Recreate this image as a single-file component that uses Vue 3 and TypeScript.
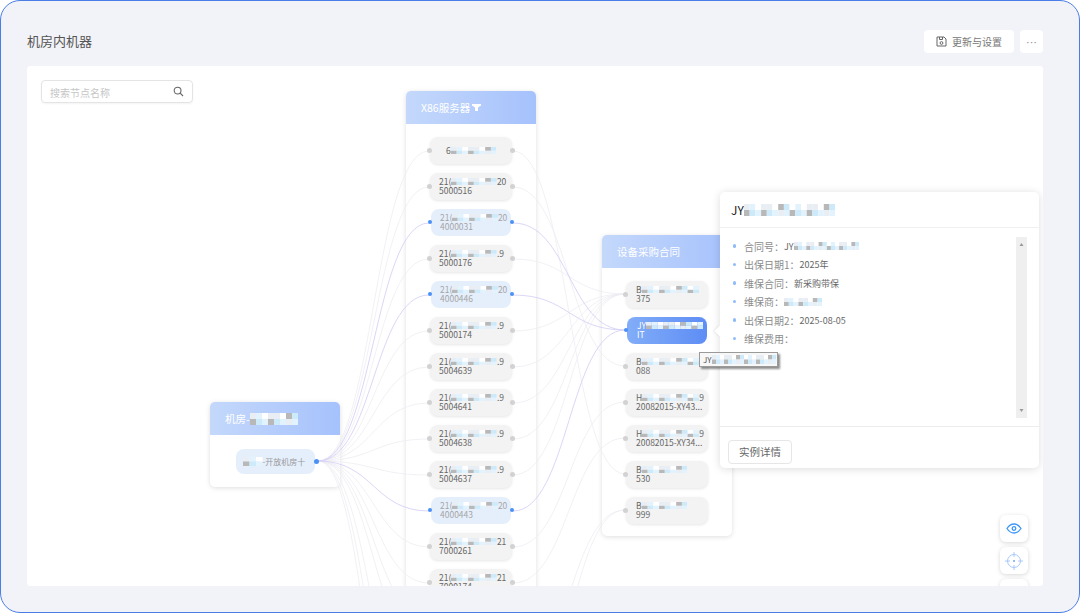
<script setup lang="ts">
import { h } from 'vue'

type NodeItem = { pre: string; suf?: string; line2?: string; kind?: string; n?: number }

const palette: Record<string, string> = {
  w: '#ffffff', l: '#e8eef4', b: '#cdeafb', c: '#e3f3fd', g: '#b8b8b8', h: '#d8d8d8'
}
const rowA = 'lcwllwgbwcwllwgb'
const rowB = 'gbcgbclcgbcgbclc'

const Mosaic = (props: { n?: number; cw?: number; ch?: number }) => {
  const n = Number(props.n ?? 8)
  const cw = Number(props.cw ?? 5.7)
  const ch = Number(props.ch ?? 3.8)
  const rects: ReturnType<typeof h>[] = []
  for (let i = 0; i < n; i++) {
    rects.push(h('rect', { x: i * cw, y: 0, width: cw, height: ch, fill: palette[rowA[i % rowA.length]] }))
    rects.push(h('rect', { x: i * cw, y: ch, width: cw, height: ch, fill: palette[rowB[i % rowB.length]] }))
  }
  return h('svg', { class: 'mosaic', width: n * cw, height: ch * 2, style: { verticalAlign: 'middle', flex: 'none' } }, rects)
}

const bNodes: NodeItem[] = [
  { pre: '6' },
  { pre: '21(', suf: '20', line2: '5000516' },
  { pre: '21(', suf: '20', line2: '4000031', kind: 'light' },
  { pre: '21(', suf: '.9', line2: '5000176' },
  { pre: '21(', suf: '20', line2: '4000446', kind: 'light' },
  { pre: '21(', suf: '.9', line2: '5000174' },
  { pre: '21(', suf: '.9', line2: '5004639' },
  { pre: '21(', suf: '.9', line2: '5004641' },
  { pre: '21(', suf: '.9', line2: '5004638' },
  { pre: '21(', suf: '.9', line2: '5004637' },
  { pre: '21(', suf: '20', line2: '4000443', kind: 'light' },
  { pre: '21(', suf: '21', line2: '7000261' },
  { pre: '21(', suf: '21', line2: '7000174' }
]
const cNodes: NodeItem[] = [
  { pre: 'B', line2: '375' },
  { pre: 'JY', line2: 'IT', kind: 'active' },
  { pre: 'B', line2: '088' },
  { pre: 'H', suf: '9', line2: '20082015-XY43...' },
  { pre: 'H', suf: '9', line2: '20082015-XY34...' },
  { pre: 'B', line2: '530', n: 8 },
  { pre: 'B', line2: '999', n: 8 }
]

const by = (i: number) => 151 + i * 36
const cy = (i: number) => 294 + i * 36
const curve = (x1: number, y1: number, x2: number, y2: number) => {
  const m = (x1 + x2) / 2
  return `M${x1} ${y1}C${m} ${y1} ${m} ${y2} ${x2} ${y2}`
}

const grayLinks: string[] = []
const purpleLinks: string[] = []
for (let i = 0; i < 15; i++) {
  const d = curve(318, 461, 429, by(i))
  if (i === 2 || i === 4 || i === 10) purpleLinks.push(d)
  else grayLinks.push(d)
}
for (const y of [760, 850, 930]) grayLinks.push(curve(318, 461, 429, y))
const rightMap: [number, number][] = [
  [0, 5], [1, 2], [3, 0], [5, 0], [6, 0], [7, 0], [8, 0], [9, 0], [11, 3], [12, 4]
]
for (const [b, c] of rightMap) grayLinks.push(curve(513, by(b), 625, cy(c)))
grayLinks.push(curve(513, 680, 625, cy(6)))
grayLinks.push(curve(513, 730, 625, cy(6)))
for (const b of [2, 4, 10]) purpleLinks.push(curve(513, by(b), 625, cy(1)))

const details = [
  { label: '合同号：', value: 'JY', mosaic: 16, cw: 4.1 },
  { label: '出保日期1：', value: '2025年' },
  { label: '维保合同：', value: '新采购带保' },
  { label: '维保商：', value: '', mosaic: 8, cw: 4.8 },
  { label: '出保日期2：', value: '2025-08-05' },
  { label: '维保费用：', value: '' }
]
</script>

<template>
  <div class="frame">
    <header class="topbar">
      <h1 class="title">机房内机器</h1>
      <div class="actions">
        <button class="btn">
          <svg width="11" height="11" viewBox="0 0 11 11" fill="none" stroke="#666" stroke-width="1">
            <path d="M1 1h7l2 2v7H1z" />
            <path d="M3.5 1v2.5h3V1" />
            <circle cx="5.5" cy="7" r="1.4" />
          </svg>
          更新与设置
        </button>
        <button class="btn more">···</button>
      </div>
    </header>

    <main class="canvas">
      <div class="search">
        <span class="placeholder">搜索节点名称</span>
        <svg width="11" height="11" viewBox="0 0 11 11" fill="none" stroke="#666" stroke-width="1.1">
          <circle cx="4.6" cy="4.6" r="3.4" />
          <path d="M7.2 7.2 10 10" />
        </svg>
      </div>

      <section class="col col-a">
        <div class="col-head">机房-<Mosaic :n="8" :cw="6" :ch="6" /></div>
        <div class="col-body body-a">
          <div class="node light single out-blue">
            <Mosaic :n="3" :cw="6.5" :ch="4.5" /><span>-开放机房十</span>
          </div>
        </div>
      </section>

      <section class="col col-b">
        <div class="col-head">X86服务器
          <svg class="funnel" width="9" height="7" viewBox="0 0 9 7"><path d="M0 0h9v1.6L6 3.6V7H3V3.6L0 1.6z" fill="#fff" /></svg>
        </div>
        <div class="col-body stack">
          <div v-for="(item, i) in bNodes" :key="i" class="node"
            :class="[item.kind, item.line2 ? '' : 'single', item.kind === 'light' ? 'blue-dots' : '']">
            <div class="l1">{{ item.pre }}<Mosaic /><span v-if="item.suf">{{ item.suf }}</span></div>
            <div v-if="item.line2" class="l2">{{ item.line2 }}</div>
            <i class="dot left" /><i class="dot right" />
          </div>
        </div>
      </section>

      <section class="col col-c">
        <div class="col-head">设备采购合同</div>
        <div class="col-body stack">
          <div v-for="(item, i) in cNodes" :key="i" class="node cnode" :class="[item.kind, item.kind === 'active' ? 'blue-dots' : '']">
            <div class="l1">{{ item.pre }}<Mosaic :n="item.n ?? 10" /><span v-if="item.suf">{{ item.suf }}</span></div>
            <div class="l2">{{ item.line2 }}</div>
            <i class="dot left" />
          </div>
        </div>
      </section>

      <svg class="links" width="1016" height="520" viewBox="27 66 1016 520" fill="none">
        <path v-for="(d, i) in grayLinks" :key="'g' + i" :d="d" stroke="#eeecf2" stroke-width=".8" />
        <path v-for="(d, i) in purpleLinks" :key="'p' + i" :d="d" stroke="#d6d1f6" stroke-width=".9" />
      </svg>

      <aside class="panel">
        <i class="arrow" />
        <div class="panel-head">JY<Mosaic :n="16" :cw="5.7" :ch="6" /></div>
        <div class="panel-body">
          <ul class="list">
            <li v-for="d in details" :key="d.label">
              <span class="lab">{{ d.label }}</span><span class="val">{{ d.value }}</span><Mosaic v-if="d.mosaic" :n="d.mosaic" :cw="d.cw" :ch="4" />
            </li>
          </ul>
          <div class="scroll">
            <svg width="11" height="181" viewBox="0 0 11 181">
              <path d="M3.5 9 5.5 6l2 3z" fill="#999" />
              <path d="M3.5 172 5.5 175l2-3z" fill="#999" />
            </svg>
          </div>
        </div>
        <div class="panel-foot"><button class="detail">实例详情</button></div>
      </aside>

      <div class="tip">JY<Mosaic :n="16" :cw="4" :ch="4.5" /></div>

      <div class="tools">
        <button class="tool">
          <svg width="16" height="11" viewBox="0 0 16 11" fill="none" stroke="#3f96f8" stroke-width="1.3">
            <path d="M1 5.5C3 2.4 5.3 1 8 1s5 1.4 7 4.5C13 8.6 10.7 10 8 10S3 8.6 1 5.5z" />
            <circle cx="8" cy="5.5" r="1.8" />
          </svg>
        </button>
        <button class="tool">
          <svg width="18" height="18" viewBox="0 0 18 18" fill="none" stroke="#a9c8fb" stroke-width="1">
            <circle cx="9" cy="9" r="6.5" />
            <path d="M9 0v5M9 13v5M0 9h5M13 9h5" />
            <circle cx="9" cy="9" r="1" fill="#6ea4f8" stroke="none" />
          </svg>
        </button>
        <button class="tool" />
      </div>
    </main>
  </div>
</template>

<style>
html, body { margin: 0; background: #fff; }
</style>

<style scoped>
.frame {
  box-sizing: border-box;
  width: 1080px;
  height: 613px;
  padding: 29px 36px 26px 26px;
  border: 1px solid #4a7ee6;
  border-radius: 20px;
  background: #f2f3f8;
  display: flex;
  flex-direction: column;
  overflow: hidden;
  font-family: "Noto Sans CJK SC", "Noto Sans", sans-serif;
}
.topbar {
  height: 36px;
  flex: none;
  display: flex;
  justify-content: space-between;
  align-items: flex-start;
}
.title {
  margin: 1px 0 0;
  font-size: 13px;
  line-height: 20px;
  font-weight: 400;
  color: #555;
}
.actions { display: flex; gap: 6px; }
button { font-family: inherit; }
.btn {
  height: 23px;
  width: 90px;
  display: flex;
  align-items: center;
  justify-content: center;
  gap: 5px;
  padding: 0;
  border: 0;
  border-radius: 4px;
  background: #fff;
  color: #777;
  font-size: 10px;
}
.btn.more {
  width: 23px;
  font-family: "Liberation Sans", sans-serif;
  font-size: 11px;
  color: #888;
}
.canvas {
  position: relative;
  flex: 1;
  background: #fff;
  border-radius: 3px;
  overflow: hidden;
}
.search {
  position: absolute;
  left: 14px;
  top: 14px;
  box-sizing: border-box;
  width: 152px;
  height: 23px;
  padding: 0 8px;
  display: flex;
  align-items: center;
  justify-content: space-between;
  border: 1px solid #e4e4e4;
  border-radius: 4px;
  box-shadow: 0 1px 2px rgba(0, 0, 0, .05);
}
.placeholder { margin-top: 1px; font-size: 10px; color: #c6c6c6; }
.col {
  position: absolute;
  width: 130px;
  border-radius: 5px;
  background: #fff;
  box-shadow: 0 1px 5px rgba(0, 0, 0, .13);
}
.col-a { left: 183px; top: 336px; }
.col-b { left: 379px; top: 25px; }
.col-c { left: 575px; top: 169px; }
.col-head {
  box-sizing: border-box;
  height: 33px;
  padding-left: 15px;
  display: flex;
  align-items: center;
  border-radius: 5px 5px 0 0;
  background: linear-gradient(90deg, #c4d8fb, #a6c2fd);
  color: #fff;
  font-size: 10.5px;
}
.funnel { margin-left: 2px; }
.body-a { height: 52px; padding: 14px 0 0 26px; box-sizing: border-box; }
.stack {
  padding: 13px 0 12px 24px;
  display: flex;
  flex-direction: column;
  gap: 9px;
}
.node {
  position: relative;
  z-index: 3;
  box-sizing: border-box;
  width: 82px;
  height: 27px;
  padding: 4px 0 0 9px;
  border-radius: 8px;
  background: #f3f3f3;
  box-shadow: 0 1px 3px rgba(0, 0, 0, .1);
  color: #666;
  font-size: 8.5px;
  line-height: 9px;
}
.l1, .l2 { white-space: nowrap; height: 9px; }
.l1 { display: flex; align-items: center; }
.node.single { padding: 9px 0 0 16px; }
.node.light {
  margin-left: 1px;
  width: 80px;
  background: #e5effc;
  box-shadow: none;
  color: #a5a5a5;
}
.node.active {
  margin-left: 1px;
  width: 80px;
  background: linear-gradient(90deg, #82adf8, #5e8df5);
  box-shadow: none;
  color: #fff;
}
.col-a .node {
  width: 79px;
  height: 25px;
  margin: 0;
  padding: 0 0 0 7px;
  display: flex;
  align-items: center;
  font-size: 8px;
  color: #999;
}
.out-blue::after {
  content: "";
  position: absolute;
  right: -4px;
  top: 10px;
  width: 5px;
  height: 5px;
  border-radius: 50%;
  background: #4a90f7;
}
.cnode { padding-left: 10px; }
.dot {
  position: absolute;
  top: 11px;
  width: 5px;
  height: 5px;
  border-radius: 50%;
  background: #d2d2d2;
}
.dot.left { left: -3px; }
.dot.right { right: -3px; }
.blue-dots .dot { background: #4a90f7; width: 4px; height: 4px; }
.links {
  position: absolute;
  left: 0;
  top: 0;
  z-index: 2;
  pointer-events: none;
}
.panel {
  position: absolute;
  left: 693px;
  top: 126px;
  z-index: 5;
  box-sizing: border-box;
  width: 319px;
  height: 276px;
  display: flex;
  flex-direction: column;
  border-radius: 5px;
  background: #fff;
  box-shadow: 0 1px 8px rgba(0, 0, 0, .14);
}
.arrow {
  position: absolute;
  left: -4px;
  top: 135px;
  width: 8px;
  height: 8px;
  background: #fff;
  box-shadow: -1px 1px 2px rgba(0, 0, 0, .07);
  transform: rotate(45deg);
}
.panel-head {
  height: 36px;
  flex: none;
  box-sizing: border-box;
  padding-left: 11px;
  display: flex;
  align-items: center;
  border-bottom: 1px solid #f0f0f0;
  color: #222;
  font-size: 12px;
}
.panel-body {
  flex: 1;
  display: flex;
  justify-content: space-between;
  padding: 9px 12px 0 0;
}
.list {
  margin: 0;
  padding: 0 0 0 12.5px;
  list-style: none;
}
.list li {
  position: relative;
  height: 18.5px;
  display: flex;
  align-items: center;
  padding-left: 11.5px;
  font-size: 9px;
  color: #666;
}
.list li::before {
  content: "";
  position: absolute;
  left: 0;
  top: 7px;
  width: 3.5px;
  height: 3.5px;
  border-radius: 50%;
  background: #8fbcf8;
}
.lab { font-size: 10px; color: #8c8c8c; }
.scroll {
  width: 11px;
  height: 181px;
  background: #efefef;
}
.panel-foot {
  height: 42px;
  flex: none;
  box-sizing: border-box;
  padding: 10px 0 0 8px;
  border-top: 1px solid #ededed;
}
.detail {
  width: 64px;
  height: 24px;
  padding: 0;
  border: 1px solid #e6e6e6;
  border-radius: 4px;
  background: #fff;
  color: #666;
  font-size: 10.5px;
}
.tip {
  position: absolute;
  left: 672px;
  top: 286px;
  z-index: 6;
  box-sizing: border-box;
  width: 79px;
  height: 15px;
  padding-left: 3px;
  display: flex;
  align-items: center;
  border: 1px solid #9a9a9a;
  background: #f7f7f7;
  box-shadow: 2px 2px 2px rgba(0, 0, 0, .45);
  color: #555;
  font-size: 8px;
}
.tools {
  position: absolute;
  left: 973px;
  top: 449px;
  z-index: 4;
  display: flex;
  flex-direction: column;
  gap: 5px;
}
.tool {
  width: 28px;
  height: 27px;
  padding: 0;
  display: flex;
  align-items: center;
  justify-content: center;
  border: 0;
  border-radius: 6px;
  background: #fff;
  box-shadow: 0 1px 4px rgba(0, 0, 0, .16);
}
</style>
